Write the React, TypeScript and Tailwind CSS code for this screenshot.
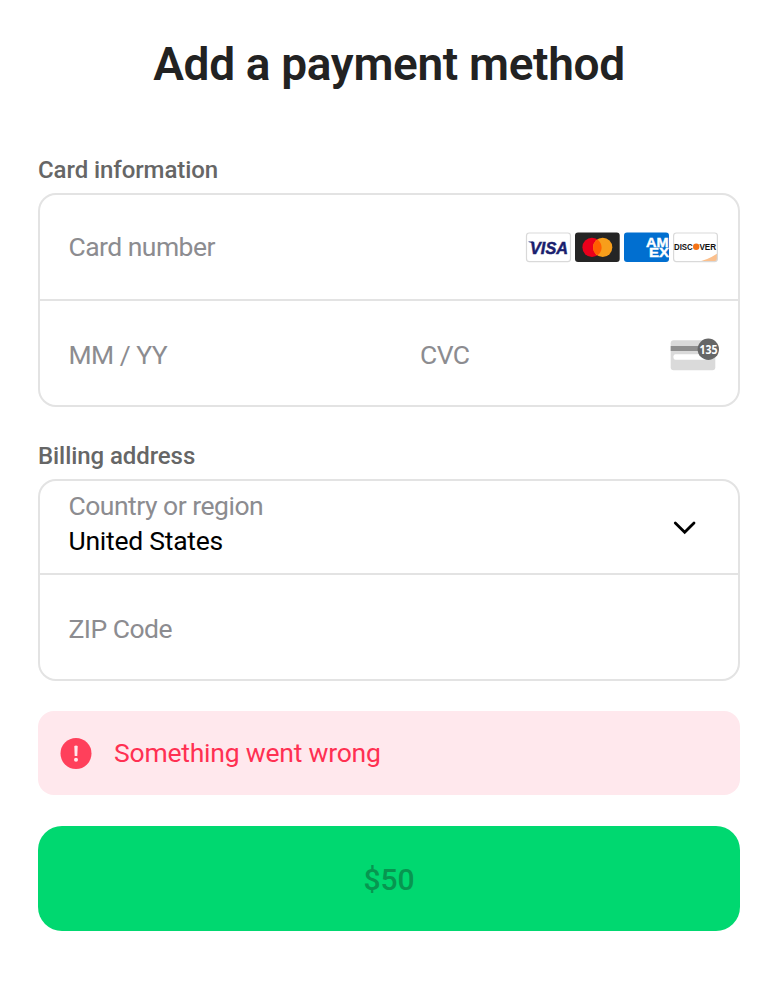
import React from "react";

function CardBrands() {
  return (
    <svg className="h-[32px] w-[193px] shrink-0" viewBox="525 231 193 32" aria-label="Accepted cards">
      <defs>
        <clipPath id="amex"><rect x="624" y="232.5" width="45" height="29.5" rx="3" /></clipPath>
        <clipPath id="discover"><rect x="673.6" y="233" width="43.8" height="28.6" rx="2.5" /></clipPath>
      </defs>
      <rect x="526.5" y="233" width="44" height="28.6" rx="2.8" fill="#fff" stroke="#d9d9d9" strokeWidth="1.2" />
      <text x="530" y="253.5" fontFamily="Liberation Sans, sans-serif" fontWeight="700" fontStyle="italic" fontSize="16.8" fill="#191e6e" stroke="#191e6e" strokeWidth="0.5" textLength="38" lengthAdjust="spacingAndGlyphs">VISA</text>
      <path d="M528.5 241.500h4.500l1.500 3q-2.500-2-6-2.500z" fill="#191e6e" />
      <rect x="575" y="232.500" width="44.700" height="29.500" rx="3" fill="#252525" />
      <circle cx="592" cy="247.400" r="9.600" fill="#eb001b" />
      <circle cx="602.700" cy="247.400" r="9.600" fill="#f79e1b" />
      <path d="M597.350 239.430a9.600 9.600 0 0 1 0 15.940a9.600 9.600 0 0 1 0-15.940z" fill="#ff5f00" />
      <g clipPath="url(#amex)">
        <rect x="624" y="232" width="45" height="31" fill="#016fd0" />
        <g fontFamily="Liberation Sans, sans-serif" fontWeight="700" fontSize="13" fill="#fff" stroke="#fff" strokeWidth="0.400">
          <text x="646" y="246.700" textLength="22.500" lengthAdjust="spacingAndGlyphs">AM</text>
          <text x="649" y="257.300" textLength="20" lengthAdjust="spacingAndGlyphs">EX</text>
        </g>
      </g>
      <rect x="673.600" y="233" width="43.800" height="28.600" rx="2.800" fill="#fff" />
      <path clipPath="url(#discover)" d="M697 262q11-2 21-9v9z" fill="#fbc08d" />
      <rect x="673.600" y="233" width="43.800" height="28.600" rx="2.800" fill="none" stroke="#d9d9d9" strokeWidth="1.200" />
      <g fontFamily="Liberation Sans, sans-serif" fontWeight="700" fontSize="8.2" fill="#111">
        <text x="674" y="249.700" textLength="18.800" lengthAdjust="spacingAndGlyphs">DISC</text>
        <text x="699.400" y="249.700" textLength="16.800" lengthAdjust="spacingAndGlyphs">VER</text>
      </g>
      <circle cx="696.200" cy="246.800" r="3.200" fill="#f47216" />
    </svg>
  );
}

function CvcIcon() {
  return (
    <svg className="h-[34px] w-[50px] shrink-0" viewBox="670 338 50 34" aria-hidden="true">
      <rect x="670.700" y="340.300" width="44.600" height="30" rx="3" fill="#dadada" />
      <rect x="670.700" y="346" width="44.600" height="5" fill="#8f8f8f" />
      <rect x="673.500" y="354.300" width="38" height="5.500" rx="2" fill="#fff" />
      <circle cx="708.300" cy="349.300" r="10.700" fill="#666" />
      <text x="699.500" y="353.600" fontFamily="Open Sans, sans-serif" fontWeight="700" fontSize="12.5" fill="#fff" textLength="18" lengthAdjust="spacingAndGlyphs">135</text>
    </svg>
  );
}

const label = "text-[24px] leading-[28px] font-medium tracking-[-0.08px] text-[#666]";
const field = "text-[26.5px] leading-[36px] tracking-[-0.54px] text-[#8c8c90]";
const panel = "rounded-[18px] border-2 border-[#e3e3e3] bg-white";

export default function App() {
  return (
    <main className="flex h-[1000px] w-[778px] flex-col bg-white px-[38px] pt-[36px] font-['Roboto',sans-serif]">
      <h1 className="h-[56px] text-center text-[46px] leading-[56px] font-semibold tracking-[-0.33px] text-[#222]">
        Add a payment method
      </h1>

      <section className="mt-[64px]">
        <h2 className={label}>Card information</h2>
        <div className={`mt-[9px] h-[214px] ${panel}`}>
          <div className="flex h-[106px] items-center justify-between border-b-2 border-[#e3e3e3] pr-[20px] pl-[28.5px]">
            <span className={field}>Card number</span>
            <CardBrands />
          </div>
          <div className="flex h-[104px] items-center pt-[4px] pr-[18px] pl-[28.5px]">
            <span className={`w-[351.5px] ${field}`}>MM / YY</span>
            <span className={`flex-1 ${field}`}>CVC</span>
            <CvcIcon />
          </div>
        </div>
      </section>

      <section className="mt-[35px]">
        <h2 className={label}>Billing address</h2>
        <div className={`mt-[9px] h-[202px] ${panel}`}>
          <div className="flex h-[94px] items-center justify-between border-b-2 border-[#e3e3e3] pr-[42px] pl-[28.5px]">
            <div className="flex flex-col items-start pb-[8px]">
              <span className="text-[26.5px] leading-[35px] tracking-[-0.5px] text-[#8c8c90]">Country or region</span>
              <span className="text-[26.5px] leading-[35px] tracking-[-0.25px] text-black">United States</span>
            </div>
            <svg className="h-[16px] w-[24px]" viewBox="0 0 24 16" fill="none" stroke="#000" strokeWidth="2.800" strokeLinecap="round">
              <path d="M3.300 4L12.700 13.200L22 4" />
            </svg>
          </div>
          <div className="flex h-[104px] items-center pt-[4px] pl-[28.5px]">
            <span className={field}>ZIP Code</span>
          </div>
        </div>
      </section>

      <div className="mt-[30px] flex h-[84.300px] items-center rounded-[16px] bg-[#ffe8ed] pl-[22px]">
        <svg className="h-[32px] w-[32px]" viewBox="0 0 32 32">
          <circle cx="16" cy="16.500" r="15.500" fill="#ff405b" />
          <path d="M14.300 9q1.700-.900 3.400 0l-.4 10h-2.600z" fill="#ffe8ed" />
          <circle cx="16" cy="22.800" r="2" fill="#ffe8ed" />
        </svg>
        <span className="ml-[22px] text-[26.5px] leading-[36px] tracking-[-0.22px] text-[#ff3052]">Something went wrong</span>
      </div>

      <button className="mt-[30.400px] h-[105.700px] rounded-[24px] bg-[#00d870] pt-[2.500px] text-[30px] leading-[36px] font-medium text-[#079650]">
        $50
      </button>
    </main>
  );
}
